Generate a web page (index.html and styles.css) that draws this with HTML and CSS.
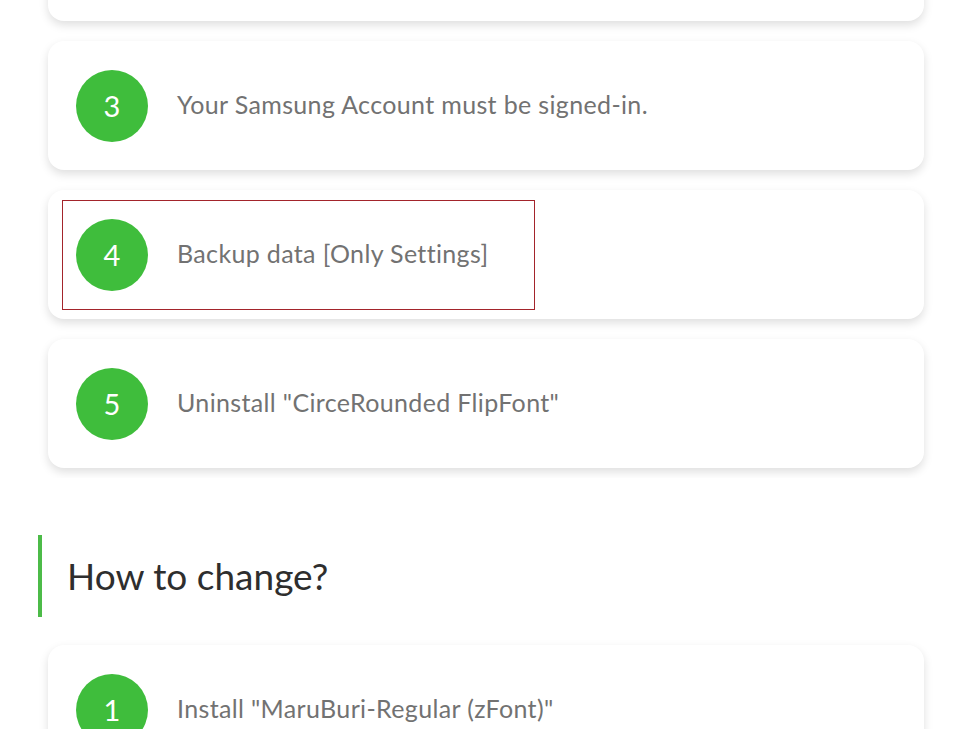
FILE: index.html
```html
<!DOCTYPE html>
<html>
<head>
<meta charset="utf-8">
<link rel="stylesheet" href="styles.css">
</head>
<body>
<div class="clip">
  <div class="steps">
    <div class="card"></div>
    <div class="card"><div class="num">3</div><div class="txt">Your Samsung Account must be signed-in.</div></div>
    <div class="card"><div class="mark"><div class="num">4</div><div class="txt">Backup data [Only Settings]</div></div></div>
    <div class="card"><div class="num">5</div><div class="txt">Uninstall "CirceRounded FlipFont"</div></div>
  </div>
</div>
<h2 class="head">How to change?</h2>
<div class="clip2">
  <div class="card"><div class="num">1</div><div class="txt">Install "MaruBuri-Regular (zFont)"</div></div>
</div>
</body>
</html>
```
FILE: styles.css
```css
html, body { margin: 0; padding: 0; background: #fff; }
body { font-family: "Lato", "Noto Sans", sans-serif; width: 972px; height: 729px; overflow: hidden; }
.clip { margin: 0 38px; overflow: hidden; padding: 0 10px 10px; }
.steps { margin-top: -108px; display: flex; flex-direction: column; gap: 20px; }
.card {
  background: #fff;
  border-radius: 16px;
  height: 129px;
  box-shadow: 0 4px 10px rgba(0,0,0,0.13);
  display: flex;
  align-items: center;
  padding-left: 28px;
  box-sizing: border-box;
}
.mark {
  display: flex; align-items: center;
  margin-left: -14px;
  padding-left: 13px;
  width: 473px; height: 110px; box-sizing: border-box;
  border: 1.5px solid #a3242b;
}
.num {
  width: 72px; height: 72px; border-radius: 50%;
  background: #3fbd3c; color: #fff;
  display: flex; align-items: center; justify-content: center;
  font-size: 29px; font-weight: 400; flex: none;
}
.txt { margin-left: 29px; padding-bottom: 4px; font-size: 25px; font-weight: 400; color: #727272; letter-spacing: 0.35px; }
.head {
  margin: 57px 0 0 38px;
  border-left: 4px solid #4cbb48;
  padding-left: 25px;
  height: 82px;
  display: flex; align-items: center;
  font-size: 37px; font-weight: 400; color: #2e2e2e;
  padding-bottom: 2px; box-sizing: border-box;
}
.clip2 { margin: 28px 38px 0; padding: 0 10px; }
```
